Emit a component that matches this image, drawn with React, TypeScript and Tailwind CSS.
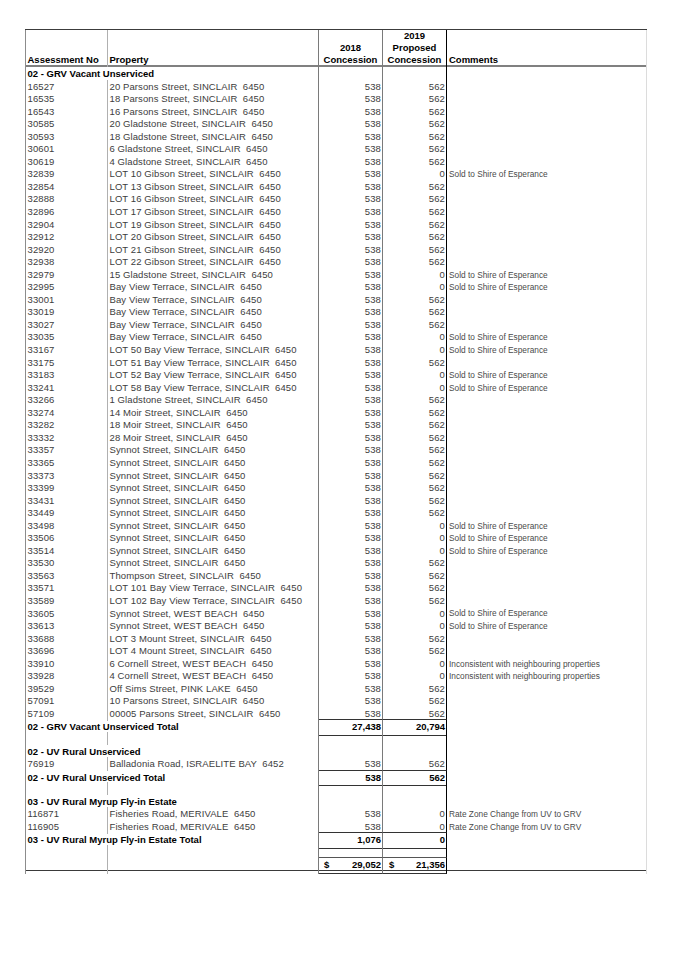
import React from "react";

type Item = [string, string, number, string?];

const SOLD = "Sold to Shire of Esperance";
const INC = "Inconsistent with neighbouring properties";
const RZC = "Rate Zone Change from UV to GRV";

const grvRows: Item[] = [
  ["16527", "20 Parsons Street, SINCLAIR  6450", 562],
  ["16535", "18 Parsons Street, SINCLAIR  6450", 562],
  ["16543", "16 Parsons Street, SINCLAIR  6450", 562],
  ["30585", "20 Gladstone Street, SINCLAIR  6450", 562],
  ["30593", "18 Gladstone Street, SINCLAIR  6450", 562],
  ["30601", "6 Gladstone Street, SINCLAIR  6450", 562],
  ["30619", "4 Gladstone Street, SINCLAIR  6450", 562],
  ["32839", "LOT 10 Gibson Street, SINCLAIR  6450", 0, SOLD],
  ["32854", "LOT 13 Gibson Street, SINCLAIR  6450", 562],
  ["32888", "LOT 16 Gibson Street, SINCLAIR  6450", 562],
  ["32896", "LOT 17 Gibson Street, SINCLAIR  6450", 562],
  ["32904", "LOT 19 Gibson Street, SINCLAIR  6450", 562],
  ["32912", "LOT 20 Gibson Street, SINCLAIR  6450", 562],
  ["32920", "LOT 21 Gibson Street, SINCLAIR  6450", 562],
  ["32938", "LOT 22 Gibson Street, SINCLAIR  6450", 562],
  ["32979", "15 Gladstone Street, SINCLAIR  6450", 0, SOLD],
  ["32995", "Bay View Terrace, SINCLAIR  6450", 0, SOLD],
  ["33001", "Bay View Terrace, SINCLAIR  6450", 562],
  ["33019", "Bay View Terrace, SINCLAIR  6450", 562],
  ["33027", "Bay View Terrace, SINCLAIR  6450", 562],
  ["33035", "Bay View Terrace, SINCLAIR  6450", 0, SOLD],
  ["33167", "LOT 50 Bay View Terrace, SINCLAIR  6450", 0, SOLD],
  ["33175", "LOT 51 Bay View Terrace, SINCLAIR  6450", 562],
  ["33183", "LOT 52 Bay View Terrace, SINCLAIR  6450", 0, SOLD],
  ["33241", "LOT 58 Bay View Terrace, SINCLAIR  6450", 0, SOLD],
  ["33266", "1 Gladstone Street, SINCLAIR  6450", 562],
  ["33274", "14 Moir Street, SINCLAIR  6450", 562],
  ["33282", "18 Moir Street, SINCLAIR  6450", 562],
  ["33332", "28 Moir Street, SINCLAIR  6450", 562],
  ["33357", "Synnot Street, SINCLAIR  6450", 562],
  ["33365", "Synnot Street, SINCLAIR  6450", 562],
  ["33373", "Synnot Street, SINCLAIR  6450", 562],
  ["33399", "Synnot Street, SINCLAIR  6450", 562],
  ["33431", "Synnot Street, SINCLAIR  6450", 562],
  ["33449", "Synnot Street, SINCLAIR  6450", 562],
  ["33498", "Synnot Street, SINCLAIR  6450", 0, SOLD],
  ["33506", "Synnot Street, SINCLAIR  6450", 0, SOLD],
  ["33514", "Synnot Street, SINCLAIR  6450", 0, SOLD],
  ["33530", "Synnot Street, SINCLAIR  6450", 562],
  ["33563", "Thompson Street, SINCLAIR  6450", 562],
  ["33571", "LOT 101 Bay View Terrace, SINCLAIR  6450", 562],
  ["33589", "LOT 102 Bay View Terrace, SINCLAIR  6450", 562],
  ["33605", "Synnot Street, WEST BEACH  6450", 0, SOLD],
  ["33613", "Synnot Street, WEST BEACH  6450", 0, SOLD],
  ["33688", "LOT 3 Mount Street, SINCLAIR  6450", 562],
  ["33696", "LOT 4 Mount Street, SINCLAIR  6450", 562],
  ["33910", "6 Cornell Street, WEST BEACH  6450", 0, INC],
  ["33928", "4 Cornell Street, WEST BEACH  6450", 0, INC],
  ["39529", "Off Sims Street, PINK LAKE  6450", 562],
  ["57091", "10 Parsons Street, SINCLAIR  6450", 562],
  ["57109", "00005 Parsons Street, SINCLAIR  6450", 562],
];

const uvRows: Item[] = [["76919", "Balladonia Road, ISRAELITE BAY  6452", 562]];

const myrupRows: Item[] = [
  ["116871", "Fisheries Road, MERIVALE  6450", 0, RZC],
  ["116905", "Fisheries Road, MERIVALE  6450", 0, RZC],
];

// column grid and the vertical rules of each column
const COLS = "grid grid-cols-[83px_211px_64px_64px_200px]";
const ROW = `${COLS} h-[12.55px] text-[9.5px]`;
const C1 = "border-l border-r border-l-[#8c8c8c] border-r-[#b0b0b0]";
const C2 = "border-r border-r-[#7a7a7a]";
const C3 = "border-r border-r-[#7a7a7a]";
const C4 = "border-r border-r-black";
const C5 = "border-r border-r-[#dcdcdc]";
const LABEL = "col-span-2 border-l border-r border-l-[#8c8c8c] border-r-[#7a7a7a]";

const fmt = (n: number) => n.toLocaleString("en-US");

function DataRow({ item }: { item: Item }) {
  const [no, prop, v, comment] = item;
  return (
    <div className={`${ROW} text-[#3d3d3d] tracking-[0.1px]`}>
      <div className={`${C1} flex items-center pl-[1.5px]`}>{no}</div>
      <div className={`${C2} flex items-center pl-[1.5px] whitespace-pre overflow-hidden`}>{prop}</div>
      <div className={`${C3} flex items-center justify-end pr-[1px]`}>538</div>
      <div className={`${C4} flex items-center justify-end pr-[1px]`}>{v}</div>
      <div className={`${C5} flex items-center pl-[2px] text-[8.3px] text-[#4a4a4a] tracking-normal whitespace-nowrap`}>
        {comment ?? ""}
      </div>
    </div>
  );
}

function SectionRow({ label }: { label: string }) {
  return (
    <div className={ROW}>
      <div className={`${LABEL} flex items-center pl-[1.5px] font-bold text-black whitespace-nowrap`}>{label}</div>
      <div className={C3} />
      <div className={C4} />
      <div className={C5} />
    </div>
  );
}

function BlankRow() {
  return (
    <div className={ROW}>
      <div className={C1} />
      <div className={C2} />
      <div className={C3} />
      <div className={C4} />
      <div className={C5} />
    </div>
  );
}

function TotalRow({ label, a, b }: { label: string; a: number; b: number }) {
  return (
    <div className={`${ROW} font-bold text-black`}>
      <div className={`${LABEL} flex items-center pl-[1.5px] whitespace-nowrap`}>{label}</div>
      <div className={`${C3} border-y border-y-[#333] flex items-center justify-end pr-[1px]`}>{fmt(a)}</div>
      <div className={`${C4} border-y border-y-[#333] flex items-center justify-end pr-[1px]`}>{fmt(b)}</div>
      <div className={C5} />
    </div>
  );
}

function Section({ title, rows }: { title: string; rows: Item[] }) {
  const a = rows.length * 538;
  const b = rows.reduce((s, r) => s + r[2], 0);
  return (
    <>
      <SectionRow label={title} />
      {rows.map((r) => (
        <DataRow key={r[0]} item={r} />
      ))}
      <TotalRow label={`${title} Total`} a={a} b={b} />
    </>
  );
}

export default function App() {
  const all = [...grvRows, ...uvRows, ...myrupRows];
  const total2018 = all.length * 538;
  const total2019 = all.reduce((s, r) => s + r[2], 0);

  return (
    <div
      className="w-[675px] min-h-[955px] bg-white pt-[29px] pl-[25px]"
      style={{ fontFamily: '"Liberation Sans", Arial, sans-serif' }}
    >
      <div className="w-[622px] border-b-[1.5px] border-b-[#3a3a3a]">
        {/* Header */}
        <div
          className={`${COLS} h-[38px] border-t border-t-[#3c3c3c] border-b-2 border-b-[#808080] text-[9.5px] font-bold text-black leading-[12.2px]`}
        >
          <div className={`${C1} flex flex-col justify-end pl-[1.5px]`}>Assessment No</div>
          <div className={`${C2} flex flex-col justify-end pl-[1.5px]`}>Property</div>
          <div className={`${C3} flex flex-col justify-end items-center`}>
            <span>2018</span>
            <span>Concession</span>
          </div>
          <div className={`${C4} flex flex-col justify-end items-center`}>
            <span>2019</span>
            <span>Proposed</span>
            <span>Concession</span>
          </div>
          <div className={`${C5} flex flex-col justify-end pl-[2px]`}>Comments</div>
        </div>

        <Section title="02 - GRV Vacant Unserviced" rows={grvRows} />
        <BlankRow />
        <Section title="02 - UV Rural Unserviced" rows={uvRows} />
        <BlankRow />
        <Section title="03 - UV Rural Myrup Fly-in Estate" rows={myrupRows} />
        <BlankRow />

        {/* Grand total */}
        <div className={`${ROW} font-bold text-black`}>
          <div className={C1} />
          <div className={C2} />
          <div className={`${C3} border-t border-t-[#555] border-b border-b-[#333] flex items-center justify-between pl-[5px] pr-[1px]`}>
            <span>$</span>
            <span>{fmt(total2018)}</span>
          </div>
          <div className={`${C4} border-t border-t-[#555] border-b border-b-[#333] flex items-center justify-between pl-[6px] pr-[1px]`}>
            <span>$</span>
            <span>{fmt(total2019)}</span>
          </div>
          <div className={C5} />
        </div>
      </div>
    </div>
  );
}
